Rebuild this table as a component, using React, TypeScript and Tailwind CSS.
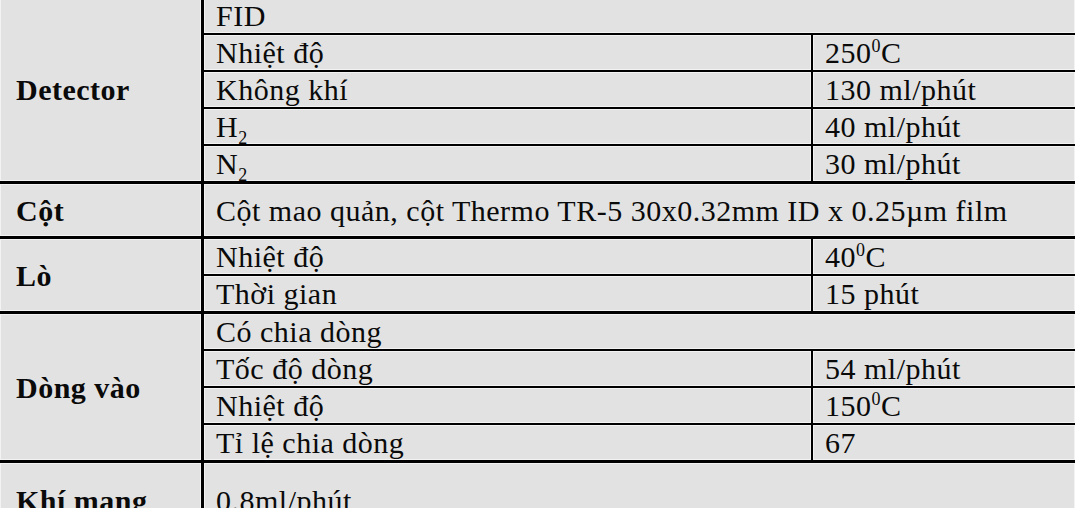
import type { ReactNode } from 'react';

const cellGlow = 'shadow-[inset_0_0_0_1px_#f3f3f3]';

const Full = ({ children, first }: { children: ReactNode; first?: boolean }) => (
  <div className={`flex items-center pl-3 ${cellGlow} ${first ? 'h-[35px]' : 'h-[37px] border-t-2 border-black'}`}>{children}</div>
);

const Pair = ({ label, value, first }: { label: ReactNode; value: ReactNode; first?: boolean }) => (
  <div className={`flex ${first ? 'h-[35px]' : 'h-[37px] border-t-2 border-black'}`}>
    <div className={`w-[609px] shrink-0 flex items-center pl-3 border-r-2 border-black ${cellGlow}`}>{label}</div>
    <div className={`flex-1 flex items-center pl-3 ${cellGlow}`}>{value}</div>
  </div>
);

const Group = ({ title, children, last }: { title: string; children: ReactNode; last?: boolean }) => (
  <div className={`flex ${last ? '' : 'border-b-[3px] border-black'}`}>
    <div className={`w-[204px] shrink-0 flex items-center pl-4 font-bold border-r-[3px] border-black ${cellGlow}`}>{title}</div>
    <div className="flex-1 flex flex-col">{children}</div>
  </div>
);

const Deg = ({ n }: { n: string }) => (
  <span>
    {n}
    <sup className="text-[18px] -top-[11px]">0</sup>C
  </span>
);

const Sub = ({ base }: { base: string }) => (
  <span>
    {base}
    <sub className="text-[18px] -bottom-[7px]">2</sub>
  </span>
);

export default function App() {
  return (
    <div className="h-screen w-full bg-white overflow-hidden">
      <div className="w-[1075px] -mt-[2px] bg-[#e2e2e2] text-[#0a0a0a] text-[30px] leading-[35px] tracking-[0.5px] font-['Liberation_Serif','Times_New_Roman',serif]">
        <Group title="Detector">
          <Full first>FID</Full>
          <Pair label="Nhiệt độ" value={<Deg n="250" />} />
          <Pair label="Không khí" value="130 ml/phút" />
          <Pair label={<Sub base="H" />} value="40 ml/phút" />
          <Pair label={<Sub base="N" />} value="30 ml/phút" />
        </Group>

        <Group title="Cột">
          <div className={`h-[52px] flex items-center pl-3 ${cellGlow}`}>
            Cột mao quản, cột Thermo TR-5 30x0.32mm ID x 0.25µm film
          </div>
        </Group>

        <Group title="Lò">
          <Pair first label="Nhiệt độ" value={<Deg n="40" />} />
          <Pair label="Thời gian" value="15 phút" />
        </Group>

        <Group title="Dòng vào">
          <Full first>Có chia dòng</Full>
          <Pair label="Tốc độ dòng" value="54 ml/phút" />
          <Pair label="Nhiệt độ" value={<Deg n="150" />} />
          <Pair label="Tỉ lệ chia dòng" value="67" />
        </Group>

        <Group title="Khí mang" last>
          <div className={`h-[74px] flex items-center pl-3 ${cellGlow}`}>0.8ml/phút</div>
        </Group>
      </div>
    </div>
  );
}
